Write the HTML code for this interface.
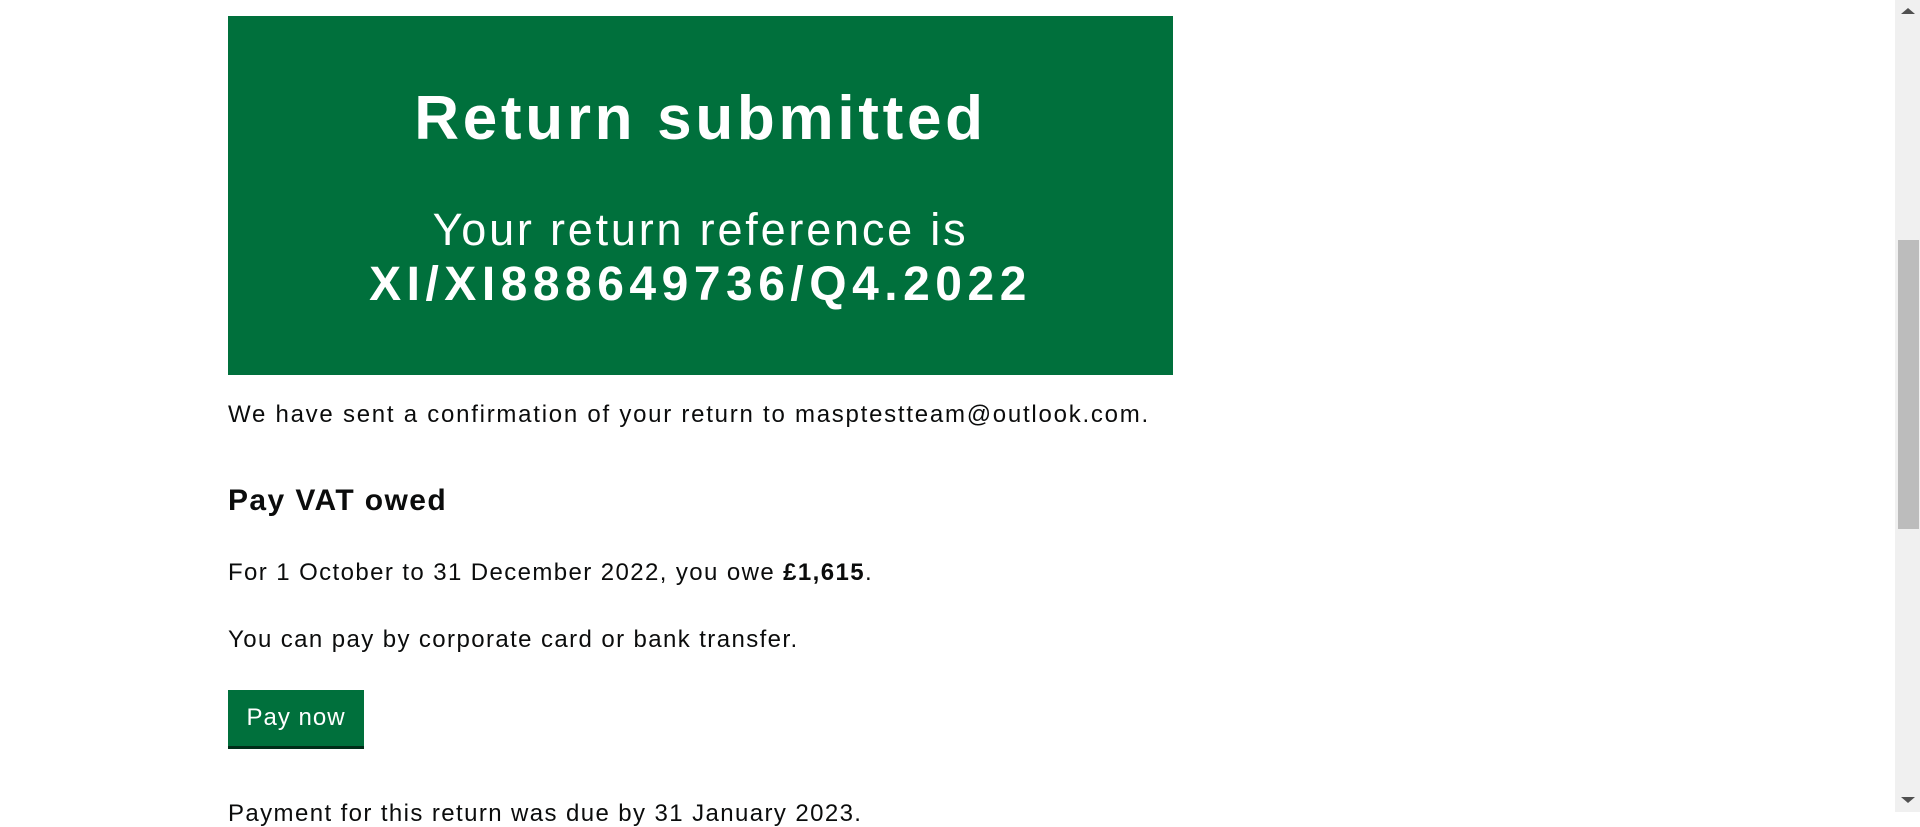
<!DOCTYPE html>
<html><head><meta charset="utf-8"><style>
html,body{margin:0;padding:0;background:#fff;width:1920px;height:812px;overflow:hidden;font-family:"Liberation Sans",Arial,sans-serif;color:#0b0c0c}
.panel{position:absolute;left:228px;top:16px;width:945px;height:359px;background:#00703c;color:#fff;text-align:center}
.t1{position:absolute;left:0;right:0;top:72px;font-size:62px;font-weight:bold;line-height:1;letter-spacing:3.7px}
.t2{position:absolute;left:0;right:0;top:186px;font-size:45px;line-height:55px;letter-spacing:2.8px}
.t2 b{display:block;font-size:48px;letter-spacing:5.5px}
.p{position:absolute;left:228px;font-size:24px;line-height:1;white-space:nowrap;letter-spacing:1.4px}
.h{position:absolute;left:228px;top:486px;font-size:30px;font-weight:bold;line-height:1;letter-spacing:1.4px}
.btn{position:absolute;left:228px;top:690px;width:136px;height:56px;background:#00703c;box-shadow:0 3px 0 #002d18;color:#fff;font-size:24px;line-height:56px;text-align:center;letter-spacing:1px}
.sb{position:absolute;left:1895px;top:0;width:25px;height:812px;background:#f0f0f0}
.th{position:absolute;left:1898px;top:240px;width:21px;height:289px;background:#bcbcbc}
</style></head><body>
<div class="panel">
<div class="t1">Return submitted</div>
<div class="t2">Your return reference is<b>XI/XI888649736/Q4.2022</b></div>
</div>
<div class="p" style="top:403px;letter-spacing:1.75px">We have sent a confirmation of your return to masptestteam@outlook.com.</div>
<div class="h">Pay VAT owed</div>
<div class="p" style="top:561px">For 1 October to 31 December 2022, you owe <b>£1,615</b>.</div>
<div class="p" style="top:628px">You can pay by corporate card or bank transfer.</div>
<div class="btn">Pay now</div>
<div class="p" style="top:802px">Payment for this return was due by 31 January 2023.</div>
<div class="sb"></div><div class="th"></div>
<div style="position:absolute;left:1901px;top:8px;width:0;height:0;border-left:7px solid transparent;border-right:7px solid transparent;border-bottom:6px solid #505050"></div>
<div style="position:absolute;left:1901px;top:797px;width:0;height:0;border-left:7px solid transparent;border-right:7px solid transparent;border-top:6px solid #505050"></div>
</body></html>
